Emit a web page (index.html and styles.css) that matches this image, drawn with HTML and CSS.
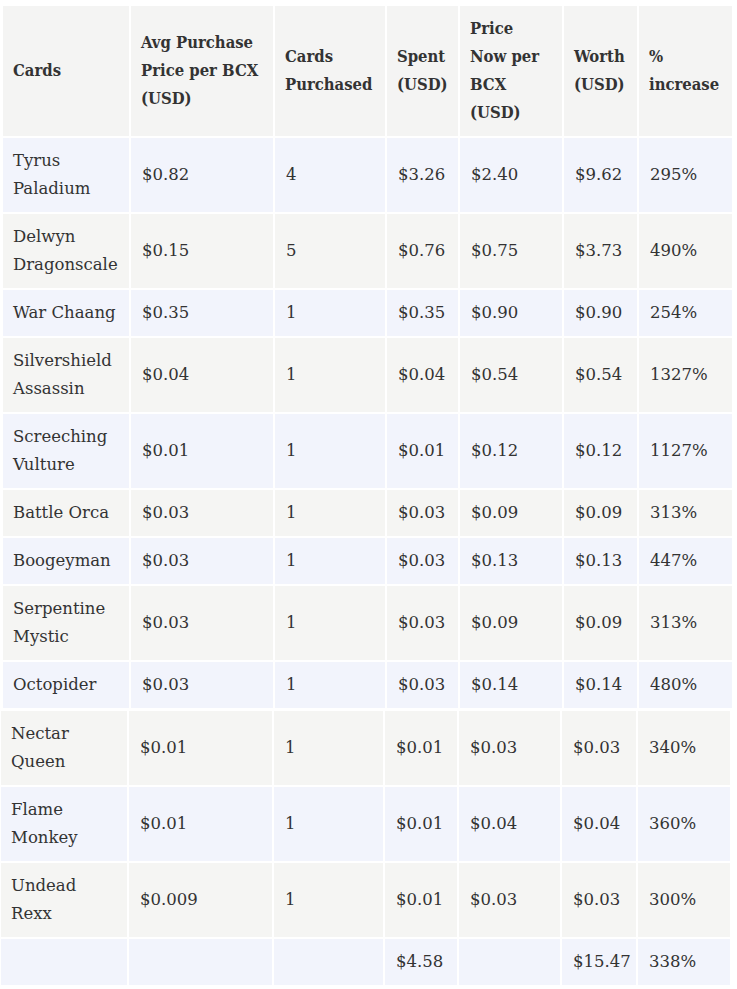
FILE: index.html
```html
<!DOCTYPE html>
<html>
<head>
<meta charset="utf-8">
<link rel="stylesheet" href="styles.css">
</head>
<body>
<div class="page">
<table class="grid grid-top">
  <colgroup>
    <col class="c1"><col class="c2"><col class="c3"><col class="c4"><col class="c5"><col class="c6"><col class="c7">
  </colgroup>
  <thead>
    <tr class="head">
      <th>Cards</th>
      <th>Avg Purchase Price per BCX (USD)</th>
      <th>Cards Purchased</th>
      <th>Spent (USD)</th>
      <th>Price Now per BCX (USD)</th>
      <th>Worth (USD)</th>
      <th>% increase</th>
    </tr>
  </thead>
  <tbody>
    <tr><td>Tyrus Paladium</td><td>$0.82</td><td>4</td><td>$3.26</td><td>$2.40</td><td>$9.62</td><td>295%</td></tr>
    <tr><td>Delwyn Dragonscale</td><td>$0.15</td><td>5</td><td>$0.76</td><td>$0.75</td><td>$3.73</td><td>490%</td></tr>
    <tr><td>War Chaang</td><td>$0.35</td><td>1</td><td>$0.35</td><td>$0.90</td><td>$0.90</td><td>254%</td></tr>
    <tr><td>Silvershield Assassin</td><td>$0.04</td><td>1</td><td>$0.04</td><td>$0.54</td><td>$0.54</td><td>1327%</td></tr>
    <tr><td>Screeching Vulture</td><td>$0.01</td><td>1</td><td>$0.01</td><td>$0.12</td><td>$0.12</td><td>1127%</td></tr>
    <tr><td>Battle Orca</td><td>$0.03</td><td>1</td><td>$0.03</td><td>$0.09</td><td>$0.09</td><td>313%</td></tr>
    <tr><td>Boogeyman</td><td>$0.03</td><td>1</td><td>$0.03</td><td>$0.13</td><td>$0.13</td><td>447%</td></tr>
    <tr><td>Serpentine Mystic</td><td>$0.03</td><td>1</td><td>$0.03</td><td>$0.09</td><td>$0.09</td><td>313%</td></tr>
    <tr><td>Octopider</td><td>$0.03</td><td>1</td><td>$0.03</td><td>$0.14</td><td>$0.14</td><td>480%</td></tr>
  </tbody>
</table>
<table class="grid grid-bottom">
  <colgroup>
    <col class="d1"><col class="d2"><col class="d3"><col class="d4"><col class="d5"><col class="d6"><col class="d7">
  </colgroup>
  <tbody>
    <tr><td>Nectar Queen</td><td>$0.01</td><td>1</td><td>$0.01</td><td>$0.03</td><td>$0.03</td><td>340%</td></tr>
    <tr><td>Flame Monkey</td><td>$0.01</td><td>1</td><td>$0.01</td><td>$0.04</td><td>$0.04</td><td>360%</td></tr>
    <tr><td>Undead Rexx</td><td>$0.009</td><td>1</td><td>$0.01</td><td>$0.03</td><td>$0.03</td><td>300%</td></tr>
    <tr><td></td><td></td><td></td><td>$4.58</td><td></td><td>$15.47</td><td>338%</td></tr>
  </tbody>
</table>
</div>
</body>
</html>
```

FILE: styles.css
```css
* { box-sizing: border-box; }
html, body { margin: 0; padding: 0; background: #fff; }
.page { padding-top: 4px; }
.grid {
  border-collapse: separate;
  border-spacing: 2px;
  table-layout: fixed;
  font-family: "DejaVu Serif", "Liberation Serif", serif;
  font-size: 16.5px;
  line-height: 28px;
  color: #333;
}
.grid-top { width: 733px; margin-left: 1px; }
.grid-bottom { width: 731px; margin-left: -1px; margin-top: -1px; }
.grid th, .grid td {
  padding: 9px 10px 9px 10px;
  text-align: left;
  vertical-align: middle;
}
.grid th {
  font-weight: bold;
  font-stretch: condensed;
  font-size: 16.5px;
  padding: 9px 11px 9px 10px;
  background: #f4f4f3;
}
.grid td:not(:first-child) { padding-left: 11px; }
.grid tbody tr:nth-child(odd) td { background: #f2f4fc; }
.grid tbody tr:nth-child(even) td { background: #f5f5f3; }
.grid-bottom tbody tr:nth-child(odd) td { background: #f5f5f3; }
.grid-bottom tbody tr:nth-child(even) td { background: #f2f4fc; }
.c1 { width: 126px; } .c2 { width: 142px; } .c3 { width: 110px; } .c4 { width: 71px; }
.c5 { width: 102px; } .c6 { width: 73px; } .c7 { width: 93px; }
.d1 { width: 126px; } .d2 { width: 143px; } .d3 { width: 109px; } .d4 { width: 72px; }
.d5 { width: 101px; } .d6 { width: 74px; } .d7 { width: 92px; }
```
